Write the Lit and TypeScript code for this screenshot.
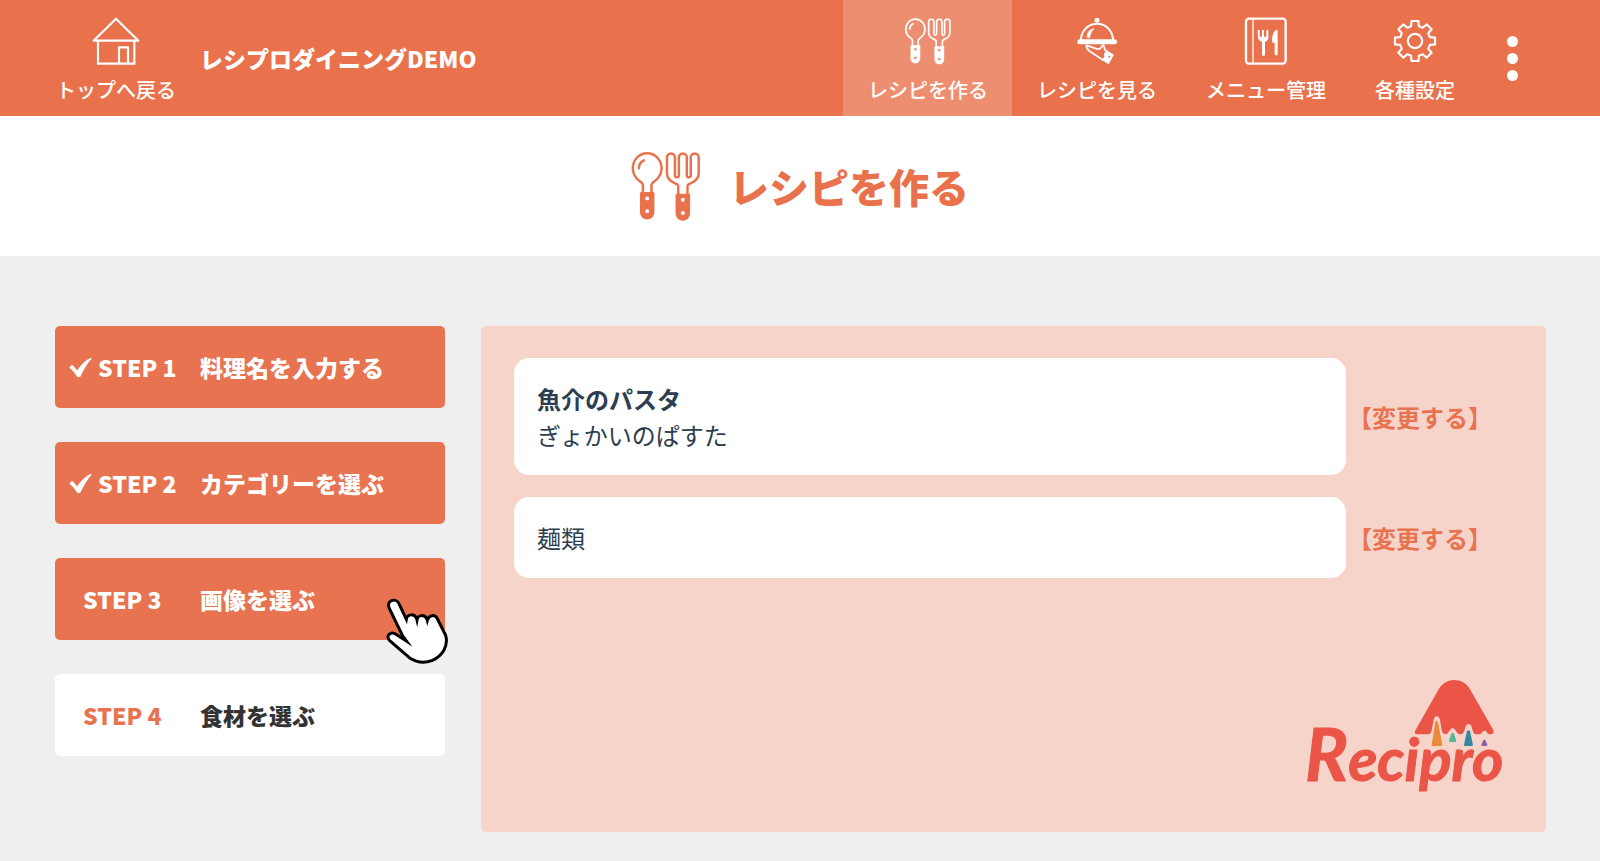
import { LitElement, html, svg, css, nothing } from "lit";
import { customElement, property, state } from "lit/decorators.js";
import { classMap } from "lit/directives/class-map.js";

type IconName = "home" | "cutlery" | "serve" | "menu" | "gear" | "check" | "pointer";

/** Outline of an eight-toothed gear centred on the origin. */
function gearPath(): string {
  const pts: string[] = [];
  for (let i = 0; i < 8; i++) {
    const mid = (i * Math.PI) / 4;
    const corners: Array<[number, number]> = [
      [-0.26, 46],
      [-0.17, 61],
      [0.17, 61],
      [0.26, 46],
    ];
    for (const [offset, radius] of corners) {
      const a = mid + offset;
      pts.push(`${(Math.sin(a) * radius).toFixed(1)} ${(-Math.cos(a) * radius).toFixed(1)}`);
    }
  }
  return `M${pts.join("L")}Z`;
}

const ICONS: Record<IconName, { box: string; body: unknown }> = {
  home: {
    box: "156 51 144 144",
    body: svg`
      <g fill="none" stroke="currentColor" stroke-width="6.5" stroke-linejoin="round">
        <path d="M161 122 L228 56 L295 122 Z" />
        <path d="M174 122 V191 H283 V122" stroke-linejoin="miter" />
        <path d="M237 191 V142 H264 V191" />
      </g>`,
  },
  cutlery: {
    box: "90 60 212 217",
    body: svg`
      <g fill="none" stroke="currentColor" stroke-width="7.5" stroke-linecap="round" stroke-linejoin="round">
        <path d="M126 188 V166 C126 160 121 157 114 152 A43.5 45.5 0 1 1 164 152 C157 157 152 160 152 166 V188" />
        <path d="M114 115 C114 103 120 95 129 91" />
        <path d="M233 193 V170 C233 165 228 162 222 160 C206 153 199 143 199 130 V82 A12 12 0 0 1 223 82 V136 A6 6 0 0 0 235 136 V82 A12 12 0 0 1 259 82 V136 A6 6 0 0 0 271 136 V82 A12 12 0 0 1 295 82 V130 C295 143 288 153 272 160 C266 162 261 165 261 170 V193" />
      </g>
      <path fill="currentColor" fill-rule="evenodd"
        d="M117 191 q0-4 4-4 h36 q4 0 4 4 v57 a22 22 0 0 1 -44 0 z M133 206 a6 6 0 1 0 12 0 a6 6 0 1 0 -12 0 z M133 245 a6 6 0 1 0 12 0 a6 6 0 1 0 -12 0 z" />
      <path fill="currentColor" fill-rule="evenodd"
        d="M225 196 q0-4 4-4 h36 q4 0 4 4 v56 a22 22 0 0 1 -44 0 z M241 210 a6 6 0 1 0 12 0 a6 6 0 1 0 -12 0 z M241 250 a6 6 0 1 0 12 0 a6 6 0 1 0 -12 0 z" />`,
  },
  serve: {
    box: "699 51 144 144",
    body: svg`
      <circle cx="771" cy="61" r="7.5" fill="currentColor" />
      <path d="M723 120 A48 49 0 0 1 819 120" fill="none" stroke="currentColor" stroke-width="6" />
      <rect x="712" y="118" width="119" height="15" rx="7.5" fill="currentColor" />
      <path d="M742 113 C740 99 748 88 762 86 C754 93 750 103 749 113 Z" fill="currentColor" stroke="currentColor" stroke-width="2" />
      <path d="M740 136 C736 140 741 146 748 153 L789 180 M740 136 L766 145 C773 148 778 149 782 144 L789 135 C795 137 791 146 796 151 L804 156"
        fill="none" stroke="currentColor" stroke-width="5.5" stroke-linejoin="round" />
      <path fill="currentColor" fill-rule="evenodd"
        d="M799 151 L822 164 L806 193 L786 181 L793 170 L792 161 Z M805 170 a3 3 0 1 0 6 0 a3 3 0 1 0 -6 0 z" />`,
  },
  menu: {
    box: "154 51 144 144",
    body: svg`
      <rect x="166" y="56" width="119" height="135" rx="9" fill="none" stroke="currentColor" stroke-width="7" />
      <path d="M187 56 V191" stroke="currentColor" stroke-width="4" />
      <path fill="currentColor"
        d="M201 92 q0-3 3-3 q3 0 3 3 v18 h7 v-18 q0-3 3-3 q3 0 3 3 v18 h7 v-18 q0-3 3-3 q3 0 3 3 v20 c0 8 -4 11 -10 14 v38 q0 3 -3 3 h-3 q-3 0 -3 -3 v-38 c-6 -3 -12 -6 -12 -14 z" />
      <path fill="currentColor" d="M258 89 q3 0 3 3 v71 q0 3 -3 3 h-3 q-3 0 -3 -3 v-34 h-4 q-4 0 -4 -6 c0 -15 4 -31 14 -34 z" />`,
  },
  gear: {
    box: "-72 -72 144 144",
    body: svg`
      <g fill="none" stroke="currentColor" stroke-width="6.5" stroke-linejoin="round">
        <path d=${gearPath()} />
        <circle r="21.5" />
      </g>`,
  },
  check: {
    box: "87 138 72 65",
    body: svg`<path fill="currentColor"
      d="M88 171 L96 162 C103 167 108 173 113 180 C122 164 138 148 156 140 L158 143 C144 158 132 178 123 199 Q117 203 112 199 C106 188 98 179 88 171 Z" />`,
  },
  pointer: {
    box: "1038 174 189 198",
    body: svg`
      <path fill="#fff" stroke="#000" stroke-width="9" stroke-linejoin="miter" stroke-miterlimit="10"
        d="M1099 303 L1088 288 L1048 205 C1036 182 1068 170 1078 193 L1099 238 C1102 221 1124 220 1130 236 L1131 240 C1134 223 1154 223 1161 237 L1162 241 C1167 224 1184 223 1191 234 L1217 286 C1226 318 1207 348 1177 361 C1152 371 1128 366 1108 353 L1050 303 C1034 287 1052 272 1070 284 Z" />`,
  },
};

@customElement("rp-icon")
export class RpIcon extends LitElement {
  static styles = css`
    :host {
      display: block;
    }
    .glyph {
      display: block;
      width: 100%;
      height: 100%;
    }
  `;

  @property() name: IconName = "home";

  render() {
    const icon = ICONS[this.name];
    return html`<svg class="glyph" viewBox=${icon.box} aria-hidden="true">${icon.body}</svg>`;
  }
}

@customElement("rp-logo")
export class RpLogo extends LitElement {
  static styles = css`
    :host {
      display: block;
      width: 207px;
    }
    .mark {
      display: block;
      width: 100%;
      height: auto;
      overflow: visible;
    }
    .word {
      font: italic 700 60px Lato, "Open Sans", sans-serif;
      fill: #ea5547;
      stroke: #ea5547;
      stroke-width: 1px;
      stroke-linejoin: round;
    }
    .initial {
      font-size: 72px;
    }
  `;

  render() {
    return html`
      <svg class="mark" viewBox="0 0 207 118" role="img" aria-label="Recipro">
        <text class="word" x="0" y="101"><tspan class="initial">R</tspan>ecipro</text>
        <g transform="translate(-15 -20) scale(0.33333)">
          <path fill="#ea5547"
            d="M375 213 L446 88 C468 51 518 51 540 88 L610 210 Q613 223 601 223 L594 222 C590 213 586 212 583 212 C577 212 574 222 570 223 L560 223 C550 222 549 215 546 203 C543 188 529 188 526 203 C522 216 520 223 510 223 C500 223 498 206 488 204 C478 206 476 222 468 223 C458 223 456 214 454 205 L450 180 C447 165 434 165 431 180 L426 205 C424 216 423 223 414 223 L382 223 Q372 222 375 213 Z" />
          <path fill="#ea8b3c" d="M436 186 Q440 178 444 186 L457 254 Q457 258 453 258 H428 Q424 258 425 254 Z" />
          <path fill="#54b795" d="M484 221 Q488 215 492 221 L499 242 Q499 246 495 246 H481 Q477 246 477 242 Z" />
          <path fill="#3387a1" d="M531 214 Q535 208 540 214 L549 254 Q549 258 545 258 H526 Q522 258 522 254 Z" />
          <path fill="#8a5fa6" d="M579 242 Q583 236 587 242 L592 254 Q592 258 589 258 H577 Q574 258 574 254 Z" />
        </g>
      </svg>
    `;
  }
}

interface NavItem {
  icon: IconName;
  label: string;
  active?: boolean;
}

interface Step {
  no: number;
  label: string;
  status: "done" | "current" | "todo";
}

interface Entry {
  title?: string;
  text: string;
}

@customElement("app-root")
export class AppRoot extends LitElement {
  static styles = css`
    :host {
      display: flex;
      flex-direction: column;
      min-height: 100vh;
      background: #efefef;
      color: #2c3e50;
      font-family: "Noto Sans CJK JP", "Noto Sans", sans-serif;
      --brand: #e9724c;
    }
    *,
    *::before {
      box-sizing: border-box;
    }
    a {
      color: inherit;
      text-decoration: none;
    }
    .bar {
      display: flex;
      align-items: stretch;
      padding: 0 54px 0 31px;
      background: var(--brand);
      color: #fff;
    }
    .item {
      display: flex;
      flex-direction: column;
      align-items: center;
      gap: 10px;
      padding: 17px 24px 11px 25px;
      font-size: 20px;
      font-weight: 500;
      line-height: 30px;
      white-space: nowrap;
    }
    .item.active {
      background: #ee8e70;
    }
    .item-icon {
      width: 48px;
      height: 48px;
    }
    .site {
      align-self: center;
      margin: 0 auto 0 0;
      font-size: 23px;
      font-weight: 900;
      line-height: 36px;
      white-space: nowrap;
    }
    .nav {
      display: flex;
    }
    .more {
      display: flex;
      flex-direction: column;
      align-items: center;
      justify-content: center;
      gap: 6px;
      width: 67px;
      padding: 0;
      border: 0;
      background: none;
      cursor: pointer;
    }
    .dot {
      width: 11px;
      height: 11px;
      border-radius: 50%;
      background: #fff;
    }
    .hero {
      display: flex;
      align-items: center;
      justify-content: center;
      gap: 28px;
      padding: 34px 24px;
      background: #fff;
      color: var(--brand);
    }
    .hero-icon {
      width: 70px;
      height: 72px;
    }
    .hero-title {
      margin: 0;
      font-size: 40px;
      font-weight: 900;
      line-height: 60px;
    }
    .content {
      flex: 1;
      display: flex;
      gap: 36px;
      padding: 70px 54px 29px 55px;
    }
    .steps {
      flex: 0 0 390px;
      display: flex;
      flex-direction: column;
      gap: 34px;
      margin: 0;
      padding: 0;
      list-style: none;
    }
    .step {
      position: relative;
      display: flex;
      align-items: center;
      width: 100%;
      padding: 23px 14px;
      border: 0;
      border-radius: 5px;
      background: #e87351;
      color: #fff;
      font: inherit;
      font-size: 23px;
      font-weight: 900;
      line-height: 36px;
      text-align: left;
      cursor: pointer;
    }
    .step.todo {
      background: #fff;
      color: #333;
    }
    .key {
      display: flex;
      align-items: center;
      gap: 6px;
      flex: 0 0 131px;
      padding-left: 14px;
    }
    .done .key {
      padding-left: 0;
    }
    .todo .key {
      color: #e87351;
    }
    .tick {
      width: 23px;
      height: 21px;
    }
    .pointer {
      position: absolute;
      top: 40px;
      right: -4px;
      width: 63px;
      height: 66px;
    }
    .panel {
      flex: 1;
      display: flex;
      flex-direction: column;
      justify-content: space-between;
      padding: 32px 34px 34px 33px;
      border-radius: 5px;
      background: #f7d4ca;
    }
    .rows {
      display: flex;
      flex-direction: column;
      gap: 22px;
      padding-right: 20px;
    }
    .row {
      display: flex;
      align-items: center;
      gap: 2px;
    }
    .card {
      flex: 1;
      padding: 23px 23px 22px;
      border-radius: 15px;
      background: #fff;
      font-size: 24px;
      line-height: 36px;
    }
    .text {
      margin: 0;
    }
    .name {
      margin: 0;
      font-size: 24px;
      font-weight: 700;
    }
    .edit {
      color: #e87351;
      font-size: 24px;
      font-weight: 700;
      line-height: 36px;
      white-space: nowrap;
    }
    .brand {
      align-self: flex-end;
    }
  `;

  private nav: NavItem[] = [
    { icon: "cutlery", label: "レシピを作る", active: true },
    { icon: "serve", label: "レシピを見る" },
    { icon: "menu", label: "メニュー管理" },
    { icon: "gear", label: "各種設定" },
  ];

  @state() private steps: Step[] = [
    { no: 1, label: "料理名を入力する", status: "done" },
    { no: 2, label: "カテゴリーを選ぶ", status: "done" },
    { no: 3, label: "画像を選ぶ", status: "current" },
    { no: 4, label: "食材を選ぶ", status: "todo" },
  ];

  @state() private entries: Entry[] = [
    { title: "魚介のパスタ", text: "ぎょかいのぱすた" },
    { text: "麺類" },
  ];

  private renderItem(item: NavItem) {
    return html`
      <a class=${classMap({ item: true, active: !!item.active })} href="#">
        <rp-icon class="item-icon" name=${item.icon}></rp-icon>
        <span>${item.label}</span>
      </a>
    `;
  }

  private renderStep(step: Step) {
    return html`
      <li>
        <button type="button" class="step ${step.status}">
          <span class="key">
            ${step.status === "done" ? html`<rp-icon class="tick" name="check"></rp-icon>` : nothing}
            <span>STEP ${step.no}</span>
          </span>
          <span>${step.label}</span>
          ${step.status === "current" ? html`<rp-icon class="pointer" name="pointer"></rp-icon>` : nothing}
        </button>
      </li>
    `;
  }

  private renderEntry(entry: Entry) {
    return html`
      <div class="row">
        <div class="card">
          ${entry.title ? html`<h2 class="name">${entry.title}</h2>` : nothing}
          <p class="text">${entry.text}</p>
        </div>
        <a class="edit" href="#">【変更する】</a>
      </div>
    `;
  }

  render() {
    return html`
      <header class="bar">
        ${this.renderItem({ icon: "home", label: "トップへ戻る" })}
        <p class="site">レシプロダイニングDEMO</p>
        <nav class="nav">${this.nav.map((item) => this.renderItem(item))}</nav>
        <button class="more" type="button" aria-label="その他">
          <span class="dot"></span><span class="dot"></span><span class="dot"></span>
        </button>
      </header>
      <div class="hero">
        <rp-icon class="hero-icon" name="cutlery"></rp-icon>
        <h1 class="hero-title">レシピを作る</h1>
      </div>
      <main class="content">
        <ol class="steps">${this.steps.map((step) => this.renderStep(step))}</ol>
        <section class="panel">
          <div class="rows">${this.entries.map((entry) => this.renderEntry(entry))}</div>
          <rp-logo class="brand"></rp-logo>
        </section>
      </main>
    `;
  }
}
